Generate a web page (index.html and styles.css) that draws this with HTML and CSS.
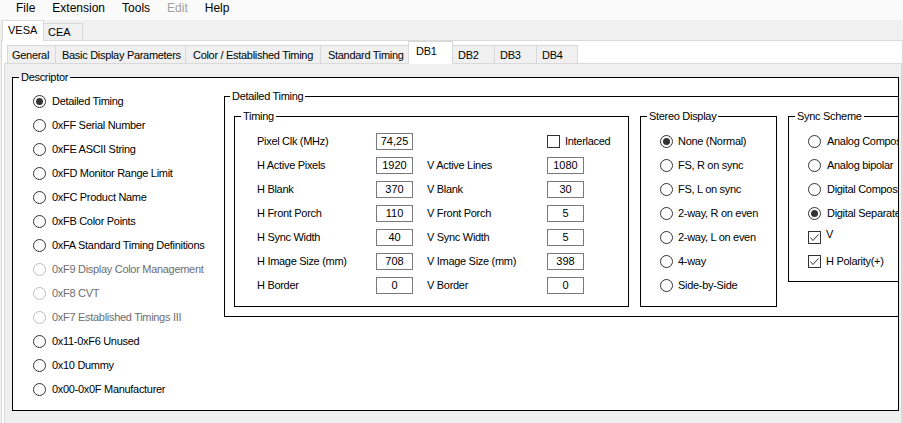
FILE: index.html
```html
<!DOCTYPE html>
<html>
<head>
<meta charset="utf-8">
<title>EDID Editor</title>
<link rel="stylesheet" href="styles.css">
</head>
<body>
<div class="menubar">
  <span class="mi">File</span><span class="mi">Extension</span><span class="mi">Tools</span><span class="mi dis">Edit</span><span class="mi">Help</span>
</div>
<div class="otabs">
  <div class="otab sel">VESA</div><div class="otab t-cea">CEA</div>
</div>
<div class="opage">
  <div class="itabs">
    <div class="itab t-gen">General</div>
    <div class="itab t-bas">Basic Display Parameters</div>
    <div class="itab t-col">Color / Established Timing</div>
    <div class="itab t-std">Standard Timing</div>
    <div class="itab sel t-db1">DB1</div>
    <div class="itab t-db2">DB2</div>
    <div class="itab t-db3">DB3</div>
    <div class="itab t-db4">DB4</div>
  </div>
  <div class="ipage">
    <fieldset class="gb desc">
      <legend>Descriptor</legend>
      <div class="desc-body">
        <div class="desc-list">
          <div class="rb"><span class="radio on"></span>Detailed Timing</div>
          <div class="rb"><span class="radio"></span>0xFF Serial Number</div>
          <div class="rb"><span class="radio"></span>0xFE ASCII String</div>
          <div class="rb"><span class="radio"></span>0xFD Monitor Range Limit</div>
          <div class="rb"><span class="radio"></span>0xFC Product Name</div>
          <div class="rb"><span class="radio"></span>0xFB Color Points</div>
          <div class="rb"><span class="radio"></span>0xFA Standard Timing Definitions</div>
          <div class="rb dis"><span class="radio"></span>0xF9 Display Color Management</div>
          <div class="rb dis"><span class="radio"></span>0xF8 CVT</div>
          <div class="rb dis"><span class="radio"></span>0xF7 Established Timings III</div>
          <div class="rb"><span class="radio"></span>0x11-0xF6 Unused</div>
          <div class="rb"><span class="radio"></span>0x10 Dummy</div>
          <div class="rb"><span class="radio"></span>0x00-0x0F Manufacturer</div>
        </div>
        <fieldset class="gb dt">
          <legend class="lg-dt">Detailed Timing</legend>
          <div class="dt-body">
            <fieldset class="gb timing">
              <legend>Timing</legend>
              <div class="tgrid">
                <span>Pixel Clk (MHz)</span><span class="tb">74,25</span><span></span>
                <span class="cbrow"><svg class="cb" width="13" height="13" viewBox="0 0 13 13"><rect x="0.5" y="0.5" width="12" height="12" fill="#fff" stroke="#333"/></svg>Interlaced</span>
                <span>H Active Pixels</span><span class="tb">1920</span><span>V Active Lines</span><span class="tb">1080</span>
                <span>H Blank</span><span class="tb">370</span><span>V Blank</span><span class="tb">30</span>
                <span>H Front Porch</span><span class="tb">110</span><span>V Front Porch</span><span class="tb">5</span>
                <span>H Sync Width</span><span class="tb">40</span><span>V Sync Width</span><span class="tb">5</span>
                <span>H Image Size (mm)</span><span class="tb">708</span><span>V Image Size (mm)</span><span class="tb">398</span>
                <span>H Border</span><span class="tb">0</span><span>V Border</span><span class="tb">0</span>
              </div>
            </fieldset>
            <fieldset class="gb stereo">
              <legend>Stereo Display</legend>
              <div class="rlist">
                <div class="rb sm"><span class="radio on"></span>None (Normal)</div>
                <div class="rb sm"><span class="radio"></span>FS, R on sync</div>
                <div class="rb sm"><span class="radio"></span>FS, L on sync</div>
                <div class="rb sm"><span class="radio"></span>2-way, R on even</div>
                <div class="rb sm"><span class="radio"></span>2-way, L on even</div>
                <div class="rb sm"><span class="radio"></span>4-way</div>
                <div class="rb sm"><span class="radio"></span>Side-by-Side</div>
              </div>
            </fieldset>
            <fieldset class="gb sync">
              <legend>Sync Scheme</legend>
              <div class="rlist">
                <div class="rb"><span class="radio"></span>Analog Composite</div>
                <div class="rb"><span class="radio"></span>Analog bipolar</div>
                <div class="rb"><span class="radio"></span>Digital Composite</div>
                <div class="rb"><span class="radio on"></span>Digital Separate</div>
                <div class="rb ck top"><svg class="cb" width="13" height="13" viewBox="0 0 13 13"><rect x="0.5" y="0.5" width="12" height="12" fill="#fff" stroke="#333"/><path d="M2.5 6.5 L5 9.5 L10.5 3.5" fill="none" stroke="#333" stroke-width="1"/></svg><span class="vtxt">V</span></div>
                <div class="rb ck"><svg class="cb" width="13" height="13" viewBox="0 0 13 13"><rect x="0.5" y="0.5" width="12" height="12" fill="#fff" stroke="#333"/><path d="M2.5 6.5 L5 9.5 L10.5 3.5" fill="none" stroke="#333" stroke-width="1"/></svg>H Polarity(+)</div>
              </div>
            </fieldset>
          </div>
        </fieldset>
      </div>
    </fieldset>
  </div>
</div>
</body>
</html>
```

FILE: styles.css
```css
html, body {
  margin: 0;
  padding: 0;
  overflow: hidden;
}
body {
  width: 903px;
  height: 423px;
  background: #f0f0f0;
  font-family: "Liberation Sans", Arial, sans-serif;
  font-size: 11px;
  color: #000;
}

/* menu */
.menubar {
  display: flex;
  height: 20px;
  padding-left: 7.5px;
  background: #fafafa;
  font-size: 12px;
  line-height: 16px;
}
.mi { padding: 0 8.5px; }
.mi.dis { color: #a0a0a0; }

/* outer tabs */
.otabs {
  display: flex;
  align-items: flex-end;
  height: 20px;
  padding-left: 2px;
}
.otab {
  box-sizing: border-box;
  height: 17px;
  border: 1px solid #d9d9d9;
  border-bottom: none;
  background: #f0f0f0;
  padding: 1px 0 0 4px;
  line-height: 14px;
  width: 39px;
}
.otab.sel {
  width: 42px;
  height: 21px;
  margin-bottom: -1px;
  background: #fff;
  position: relative;
  z-index: 1;
  padding: 2px 0 0 5px;
}
.t-cea { border-left: none; }

.opage {
  box-sizing: border-box;
  margin-left: 1px;
  border: 1px solid #d9d9d9;
  border-bottom: none;
  background: #fff;
  padding: 0 0 0 2px;
  height: 383px;
}

/* inner tabs */
.itabs {
  display: flex;
  align-items: flex-end;
  height: 22px;
  padding-left: 3px;
}
.itab {
  box-sizing: border-box;
  height: 18px;
  border-top: 1px solid #d9d9d9;
  border-left: 1px solid #d9d9d9;
  background: #f0f0f0;
  padding-top: 1.5px;
  line-height: 14px;
  letter-spacing: -0.3px;
  white-space: nowrap;
  overflow: hidden;
}
.itab.sel {
  height: 23px;
  margin-bottom: -1px;
  background: #fff;
  border-right: 1px solid #d9d9d9;
  position: relative;
  z-index: 1;
  padding-top: 2px;
}
.t-gen { width: 48px; padding-left: 4px; }
.t-bas { width: 130px; padding-left: 6px; }
.t-col { width: 135px; padding-left: 7px; }
.t-std { width: 88px; padding-left: 7px; }
.t-db1 { width: 45px; padding-left: 7px; }
.t-db2 { width: 41px; padding-left: 5px; border-left: none; }
.t-db3 { width: 42px; padding-left: 5px; }
.t-db4 { width: 42px; padding-left: 5px; border-right: 1px solid #d9d9d9; }

.ipage {
  box-sizing: border-box;
  border: 1px solid #d9d9d9;
  border-bottom: none;
  background: #f0f0f0;
  padding: 6px 0 0 7px;
  height: 360px;
}

/* group boxes */
.gb {
  box-sizing: border-box;
  margin: 0;
  padding: 0;
  border: 1px solid #000;
  min-width: 0;
  background: #fff;
  letter-spacing: -0.3px;
}
.gb > legend {
  padding: 0 2px;
  margin-left: 6px;
  line-height: 14px;
}
.gb > legend.lg-dt { margin-left: 5px; }

.desc {
  width: 887px;
}
.desc-body {
  display: flex;
  align-items: flex-start;
}
.desc-list {
  box-sizing: border-box;
  width: 211px;
  flex: none;
  padding: 5px 0 9px 20px;
}

.rb {
  display: flex;
  align-items: center;
  height: 24px;
  gap: 6px;
  white-space: nowrap;
  line-height: 14px;
}
.rb.sm { gap: 5px; }
.rb.dis { color: #6d6d6d; }
.radio {
  box-sizing: border-box;
  width: 13px;
  height: 13px;
  flex: none;
  border: 1px solid #333;
  border-radius: 50%;
  background: #fff;
  display: flex;
  align-items: center;
  justify-content: center;
}
.rb.dis .radio { border-color: #bcbcbc; }
.radio.on::after {
  content: "";
  width: 7px;
  height: 7px;
  border-radius: 50%;
  background: #333;
}
.cb { flex: none; display: block; }
.rb.ck { gap: 5px; }
.rb.top .vtxt {
  align-self: flex-start;
  margin-top: 2px;
}

/* detailed timing */
.dt {
  flex: none;
  width: 675px;
  margin-top: 5px;
}
.dt-body {
  display: flex;
  align-items: flex-start;
  gap: 11px;
  padding: 6px 0 9px 9px;
  overflow: hidden;
}
.timing {
  flex: none;
  width: 395px;
}
.tgrid {
  display: grid;
  grid-template-columns: 119px 51px 120px auto;
  grid-auto-rows: 24px;
  align-items: center;
  padding: 6px 0 9px 22px;
  line-height: 14px;
  white-space: nowrap;
}
.tb {
  box-sizing: border-box;
  width: 37px;
  height: 17px;
  border: 1px solid #7a7a7a;
  background: #fff;
  text-align: center;
  line-height: 15px;
  letter-spacing: 0;
}
.cbrow {
  display: flex;
  align-items: center;
  gap: 5px;
}

.stereo {
  flex: none;
  width: 137px;
}
.stereo .rlist { padding: 6px 0 9px 19px; }
.sync {
  flex: none;
  width: 150px;
}
.sync .rlist { padding: 6px 0 8px 19px; }
```
